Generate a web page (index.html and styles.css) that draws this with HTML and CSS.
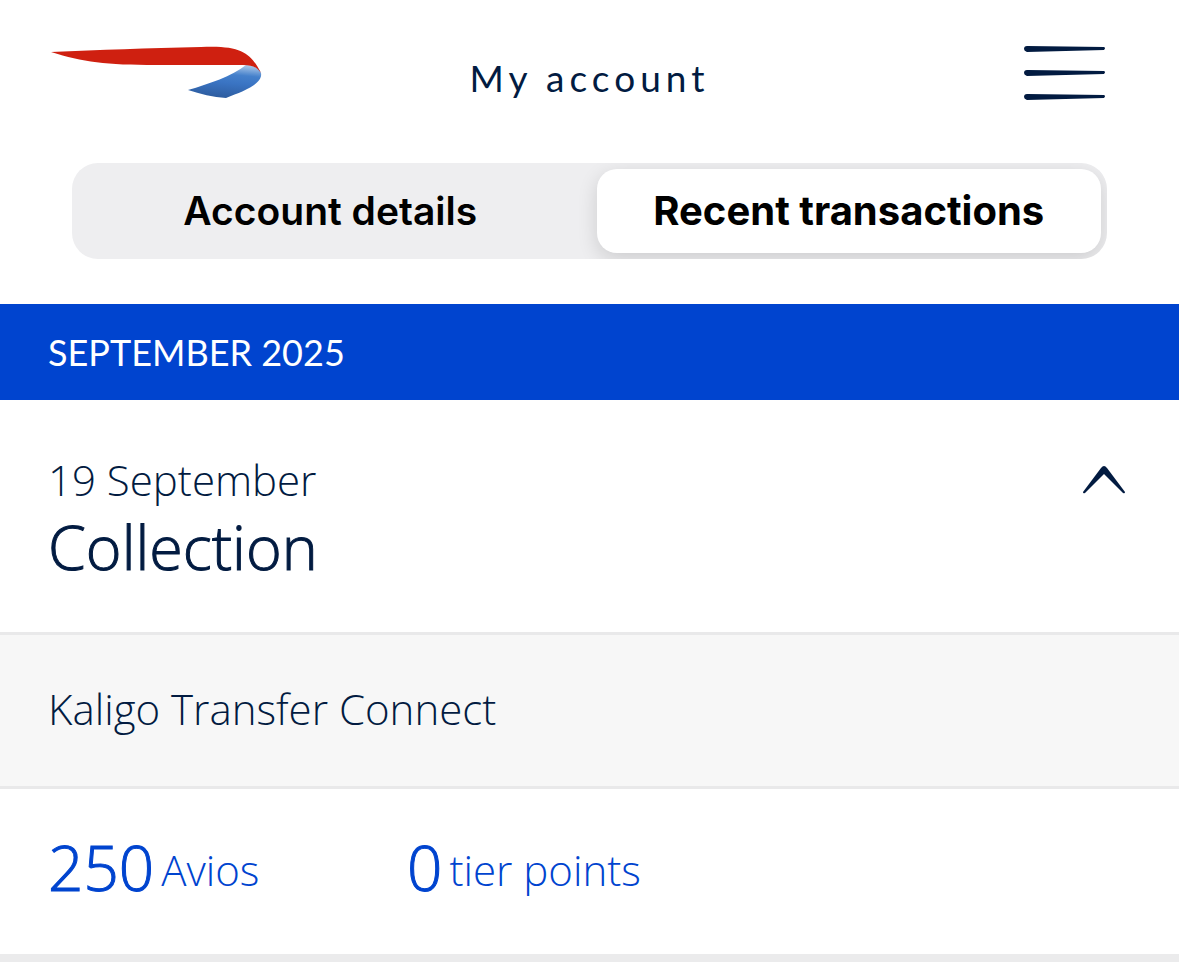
FILE: index.html
```html
<!DOCTYPE html>
<html lang="en">
<head>
<meta charset="utf-8">
<meta name="viewport" content="width=device-width, initial-scale=1">
<title>My account</title>
<link rel="stylesheet" href="styles.css">
</head>
<body>
<header class="topbar">
  <svg class="logo" viewBox="0 0 212 54" role="img" aria-label="British Airways">
    <defs>
      <linearGradient id="blue" x1=".7" x2=".5" y1="0" y2="1"><stop offset="0" stop-color="#a9c6e8"/><stop offset=".3" stop-color="#4480cb"/><stop offset=".55" stop-color="#3a74c3"/><stop offset="1" stop-color="#2d5c9f"/></linearGradient>
    </defs>
    <path fill="url(#blue)" d="M195 20 C204 20 208 23 210 28 C212 39 193 46 175 53 C162 52 149 49 137 45 C158 39 181 31 195 20Z"/>
    <path fill="#cf2010" d="M0 7 C50 5 95 3 150 2 C192 0 200 9 210 28 C206 22 201 20 192 20 L105 20 C55 20 32 17 0 7Z"/>
  </svg>
  <h1 class="title">My account</h1>
  <button class="menu" type="button" aria-label="Menu">
    <svg class="menu-icon" viewBox="0 0 82 56" aria-hidden="true">
      <path d="M3 1 L80 2 Q82 3 80 5 L3 7 Q0 6 0 4 Q0 1 3 1Z M3 25 L80 26 Q82 27 80 29 L3 31 Q0 30 0 28 Q0 25 3 25Z M3 49 L80 50 Q82 51 80 53 L3 55 Q0 54 0 52 Q0 49 3 49Z"/>
    </svg>
  </button>
</header>
<nav class="tabs" aria-label="Account sections">
  <button class="tab" type="button">Account details</button>
  <button class="tab tab-active" type="button" aria-current="page">Recent transactions</button>
</nav>
<main>
  <h2 class="month">SEPTEMBER 2025</h2>
  <article class="transaction">
    <header class="summary">
      <div>
        <p class="date">19 September</p>
        <h3 class="kind">Collection</h3>
      </div>
      <button class="toggle" type="button" aria-label="Collapse" aria-expanded="true">
        <svg class="chevron" viewBox="0 0 44 30" aria-hidden="true"><path d="M1 27 L19 3 Q22 -1 25 3 L43 27 Q43 29 41 28 L22 9 L3 28 Q1 29 1 27Z"/></svg>
      </button>
    </header>
    <p class="partner">Kaligo Transfer Connect</p>
    <div class="points">
      <p class="point"><span class="amount">250</span><span class="unit">Avios</span></p>
      <p class="point"><span class="amount">0</span><span class="unit">tier points</span></p>
    </div>
  </article>
</main>
</body>
</html>
```
FILE: styles.css
```css
* { box-sizing: border-box; }
body {
  margin: 0;
  background: #fff;
  color: #021b41;
  font-family: "Open Sans", "Noto Sans", sans-serif;
  font-weight: 300;
}
h1, h2, h3, p { margin: 0; font-weight: inherit; }
button { border: 0; padding: 0; background: none; color: inherit; cursor: pointer; }
.topbar {
  display: grid;
  grid-template-columns: 1fr auto 1fr;
  padding: 45px 51px 58px;
}
.logo { width: 212px; height: 54px; }
.title {
  padding-top: 6px;
  font-family: Lato, sans-serif;
  font-weight: 400;
  font-size: 37px;
  line-height: 54px;
  letter-spacing: 5px;
}
.menu { justify-self: end; align-self: start; margin-right: 22px; }
.menu-icon { display: block; width: 82px; height: 56px; fill: #021b41; }
.tabs {
  display: grid;
  grid-template-columns: 1fr 1fr;
  gap: 14px;
  margin: 0 72px 45px;
  padding: 6px;
  border-radius: 26px;
  background: #eeeef0;
  overflow: hidden;
}
.tab {
  height: 84px;
  padding-bottom: 2px;
  border-radius: 20px;
  color: #000;
  font-family: Inter, sans-serif;
  font-weight: 600;
  font-size: 39px;
}
.tab-active {
  background: #fff;
  box-shadow: 0 6px 20px rgba(0, 0, 0, .14);
  font-weight: 700;
  font-size: 40px;
}
.month {
  padding: 0 48px;
  background: #0044cf;
  color: #fff;
  font-family: Lato, sans-serif;
  font-weight: 400;
  font-size: 36px;
  line-height: 96px;
}
.summary {
  display: flex;
  justify-content: space-between;
  align-items: flex-start;
  padding: 50px 53px 48px 48px;
}
.date { font-size: 42px; line-height: 60px; }
.kind { font-size: 61px; line-height: 74px; -webkit-text-stroke: 1px currentColor; }
.toggle { margin-top: 15px; }
.chevron { display: block; width: 44px; height: 30px; fill: #021b41; }
.partner {
  padding: 0 48px 3px;
  border: solid #e9e9ea;
  border-width: 3px 0;
  background: #f7f7f7;
  font-size: 42px;
  line-height: 148px;
}
.points {
  display: grid;
  grid-template-columns: 359px 1fr;
  padding: 30px 48px 39px;
  border-bottom: 8px solid #ebebec;
  color: #0044cf;
}
.point { display: flex; align-items: center; gap: 7px; }
.amount { font-size: 62px; line-height: 96px; -webkit-text-stroke: 1px currentColor; }
.unit { padding-top: 4px; font-size: 42px; }
```
